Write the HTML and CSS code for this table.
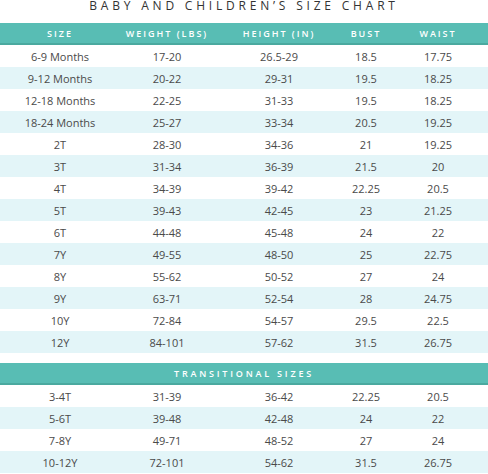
FILE: index.html
```html
<!DOCTYPE html>
<html lang="en">
<head>
    <meta charset="UTF-8">
    <meta name="viewport" content="width=device-width, initial-scale=1.0">
    <title>Baby and Children's Size Chart</title>
    <link rel="stylesheet" href="styles.css">
</head>
<body>
    <div class="chart">
        <h1 class="chart-title">Baby and Children’s Size Chart</h1>

        <!-- Main sizes -->
        <table class="size-table">
            <colgroup>
                <col class="col-size">
                <col class="col-weight">
                <col class="col-height">
                <col class="col-bust">
                <col class="col-waist">
            </colgroup>
            <thead>
                <tr>
                    <th>Size</th>
                    <th>Weight (lbs)</th>
                    <th>Height (in)</th>
                    <th>Bust</th>
                    <th>Waist</th>
                </tr>
            </thead>
            <tbody>
                <tr><td>6-9 Months</td><td>17-20</td><td>26.5-29</td><td>18.5</td><td>17.75</td></tr>
                <tr><td>9-12 Months</td><td>20-22</td><td>29-31</td><td>19.5</td><td>18.25</td></tr>
                <tr><td>12-18 Months</td><td>22-25</td><td>31-33</td><td>19.5</td><td>18.25</td></tr>
                <tr><td>18-24 Months</td><td>25-27</td><td>33-34</td><td>20.5</td><td>19.25</td></tr>
                <tr><td>2T</td><td>28-30</td><td>34-36</td><td>21</td><td>19.25</td></tr>
                <tr><td>3T</td><td>31-34</td><td>36-39</td><td>21.5</td><td>20</td></tr>
                <tr><td>4T</td><td>34-39</td><td>39-42</td><td>22.25</td><td>20.5</td></tr>
                <tr><td>5T</td><td>39-43</td><td>42-45</td><td>23</td><td>21.25</td></tr>
                <tr><td>6T</td><td>44-48</td><td>45-48</td><td>24</td><td>22</td></tr>
                <tr><td>7Y</td><td>49-55</td><td>48-50</td><td>25</td><td>22.75</td></tr>
                <tr><td>8Y</td><td>55-62</td><td>50-52</td><td>27</td><td>24</td></tr>
                <tr><td>9Y</td><td>63-71</td><td>52-54</td><td>28</td><td>24.75</td></tr>
                <tr><td>10Y</td><td>72-84</td><td>54-57</td><td>29.5</td><td>22.5</td></tr>
                <tr><td>12Y</td><td>84-101</td><td>57-62</td><td>31.5</td><td>26.75</td></tr>
            </tbody>
        </table>

        <!-- Transitional sizes -->
        <table class="size-table transitional">
            <colgroup>
                <col class="col-size">
                <col class="col-weight">
                <col class="col-height">
                <col class="col-bust">
                <col class="col-waist">
            </colgroup>
            <thead>
                <tr><th colspan="5" class="section-title">Transitional Sizes</th></tr>
            </thead>
            <tbody>
                <tr><td>3-4T</td><td>31-39</td><td>36-42</td><td>22.25</td><td>20.5</td></tr>
                <tr><td>5-6T</td><td>39-48</td><td>42-48</td><td>24</td><td>22</td></tr>
                <tr><td>7-8Y</td><td>49-71</td><td>48-52</td><td>27</td><td>24</td></tr>
                <tr><td>10-12Y</td><td>72-101</td><td>54-62</td><td>31.5</td><td>26.75</td></tr>
            </tbody>
        </table>
    </div>
</body>
</html>
```

FILE: styles.css
```css
/* Page */
body {
    margin: 0;
    padding: 0;
    background-color: #ffffff;
    font-family: "Open Sans", Arial, sans-serif;
    color: #4a4a4a;
}

.chart {
    width: 488px;
}

/* Title */
.chart-title {
    margin: 0;
    height: 23px;
    font-size: 12px;
    line-height: 12px;
    font-weight: 500;
    letter-spacing: 3.8px;
    text-transform: uppercase;
    text-align: center;
    color: #333333;
}

/* Tables */
.size-table {
    width: 488px;
    border-collapse: collapse;
    table-layout: fixed;
}

.col-size { width: 120px; }
.col-weight { width: 94px; }
.col-height { width: 130px; }
.col-bust { width: 44px; }
.col-waist { width: 100px; }

.size-table th {
    height: 20px;
    padding: 0;
    background-color: #58bdb4;
    border-bottom: 2px solid #4aa99f;
    color: #ffffff;
    font-size: 9px;
    font-weight: 600;
    letter-spacing: 2px;
    text-transform: uppercase;
    text-align: center;
    white-space: nowrap;
}

.size-table td {
    height: 22px;
    padding: 0;
    font-size: 11px;
    text-align: center;
    white-space: nowrap;
}

.size-table tbody tr:nth-child(even) td {
    background-color: #e3f5f8;
}

/* Transitional block */
.transitional {
    margin-top: 10px;
}

.size-table .section-title {
    letter-spacing: 2.8px;
}
```
